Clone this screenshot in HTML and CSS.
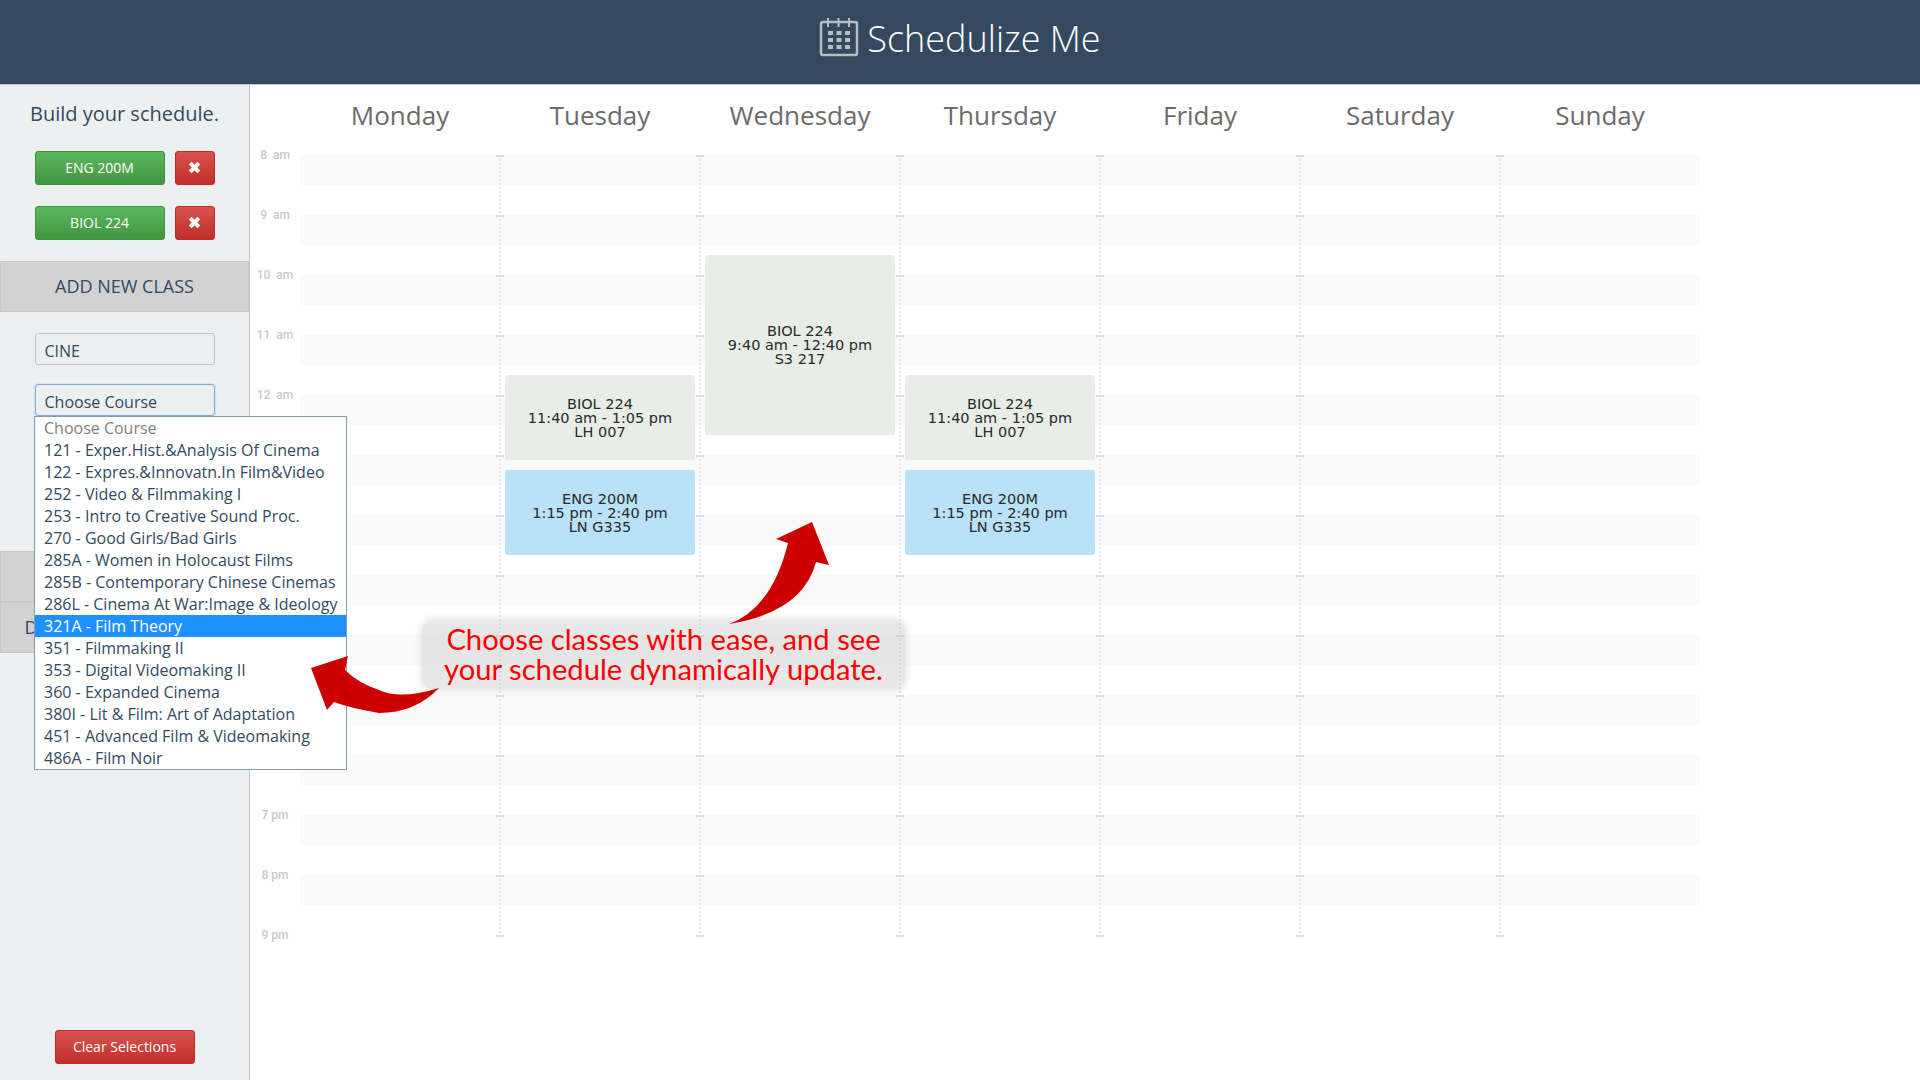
FILE: index.html
```html
<!DOCTYPE html>
<html lang="en">
  <head>
    <meta charset="UTF-8" />
    <title>Schedulize Me</title>
    <link rel="stylesheet" href="styles.css">
  </head>
  <body>
    <header class="topbar">
      <svg class="logo" width="40" height="40" viewBox="0 0 40 40">
        <rect x="2" y="5" width="36" height="33" rx="2" fill="none" stroke="#b9bdc2" stroke-width="2.5" />
        <path d="M9 1v9M19.500 1v9M30 1v9" stroke="#b9bdc2" stroke-width="2" />
        <g fill="#b9bdc2">
          <rect x="9" y="14" width="5" height="4" /><rect x="17.500" y="14" width="5" height="4" /><rect x="26" y="14" width="5" height="4" />
          <rect x="9" y="21" width="5" height="4" /><rect x="17.500" y="21" width="5" height="4" /><rect x="26" y="21" width="5" height="4" />
          <rect x="9" y="28" width="5" height="4" /><rect x="17.500" y="28" width="5" height="4" /><rect x="26" y="28" width="5" height="4" />
        </g>
      </svg>
      <h1>Schedulize Me</h1>
    </header>

    <main class="layout">
      <aside class="sidebar">
        <h2 class="build">Build your schedule.</h2>

        <div class="picked">
          <button class="btn btn-green">ENG 200M</button>
          <button class="btn btn-red btn-x">
            <svg width="13" height="13" viewBox="0 0 13 13"><path d="M2.200 2.200l8.600 8.600M10.800 2.200l-8.600 8.600" stroke="#fff" stroke-width="4" /></svg>
          </button>
        </div>
        <div class="picked">
          <button class="btn btn-green">BIOL 224</button>
          <button class="btn btn-red btn-x">
            <svg width="13" height="13" viewBox="0 0 13 13"><path d="M2.200 2.200l8.600 8.600M10.800 2.200l-8.600 8.600" stroke="#fff" stroke-width="4" /></svg>
          </button>
        </div>

        <div class="band band-add">ADD NEW CLASS</div>

        <div class="field">CINE</div>
        <div class="field field-focus">Choose Course</div>

        <div class="band band-first"></div>
        <div class="band">DOWNLOAD SCHEDULE</div>

        <button class="btn btn-red btn-clear">Clear Selections</button>
      </aside>

      <section class="calendar">
        <div class="days">
          <span>Monday</span>
          <span>Tuesday</span>
          <span>Wednesday</span>
          <span>Thursday</span>
          <span>Friday</span>
          <span>Saturday</span>
          <span>Sunday</span>
        </div>
        <div class="grid">
          <div class="times">
            <span>8 &nbsp;am</span><span>9 &nbsp;am</span><span>10 &nbsp;am</span><span>11 &nbsp;am</span>
            <span>12 &nbsp;am</span>
            <!-- 1 pm to 6 pm sit behind the open menu -->
            <span></span><span></span><span></span><span></span><span></span><span></span>
            <span>7 pm</span><span>8 pm</span><span>9 pm</span>
          </div>
          <div class="col"></div>
          <div class="col">
            <div class="event biol" style="top: 220px; height: 85px">BIOL 224<br />11:40 am - 1:05 pm<br />LH 007</div>
            <div class="event eng" style="top: 315px; height: 85px">ENG 200M<br />1:15 pm - 2:40 pm<br />LN G335</div>
          </div>
          <div class="col">
            <div class="event biol" style="top: 100px; height: 180px">BIOL 224<br />9:40 am - 12:40 pm<br />S3 217</div>
          </div>
          <div class="col">
            <div class="event biol" style="top: 220px; height: 85px">BIOL 224<br />11:40 am - 1:05 pm<br />LH 007</div>
            <div class="event eng" style="top: 315px; height: 85px">ENG 200M<br />1:15 pm - 2:40 pm<br />LN G335</div>
          </div>
          <div class="col"></div>
          <div class="col"></div>
          <div class="col"></div>
        </div>
      </section>
    </main>

    <ul class="dropdown">
      <li class="muted">Choose Course</li>
      <li>121 - Exper.Hist.&amp;Analysis Of Cinema</li>
      <li>122 - Expres.&amp;Innovatn.In Film&amp;Video</li>
      <li>252 - Video &amp; Filmmaking I</li>
      <li>253 - Intro to Creative Sound Proc.</li>
      <li>270 - Good Girls/Bad Girls</li>
      <li>285A - Women in Holocaust Films</li>
      <li>285B - Contemporary Chinese Cinemas</li>
      <li>286L - Cinema At War:Image &amp; Ideology</li>
      <li class="active">321A - Film Theory</li>
      <li>351 - Filmmaking II</li>
      <li>353 - Digital Videomaking II</li>
      <li>360 - Expanded Cinema</li>
      <li>380I - Lit &amp; Film: Art of Adaptation</li>
      <li>451 - Advanced Film &amp; Videomaking</li>
      <li>486A - Film Noir</li>
    </ul>

    <p class="callout">Choose classes with ease, and see<br />your schedule dynamically update.</p>

    <svg class="arrows" width="1920" height="1080" viewBox="0 0 1920 1080">
      <path d="M729 624 Q772 608 788 543 L776 539 L812 522 L829 565 L816 562 Q803 612 729 624 Z" fill="#cc0000" />
      <path d="M439 688 Q400 700 379 690 Q358 683 345 670 L348 656 L311 668 L327 710 L334 702 Q350 708 379 713 Q415 713 439 688 Z" fill="#cc0000" />
    </svg>
  </body>
</html>
```

FILE: styles.css
```css
* {
  box-sizing: border-box;
}
html,
body {
  height: 100%;
}
body {
  margin: 0;
  overflow: hidden;
  display: flex;
  flex-direction: column;
  font-family: "Open Sans", sans-serif;
  color: #34495e;
  background-color: #fff;
}

/* top bar */
.topbar {
  height: 85px;
  flex-shrink: 0;
  display: flex;
  justify-content: center;
  align-items: flex-start;
  gap: 8px;
  padding-top: 17px;
  background-color: #34495e;
  border-bottom: 1px solid #bdc3c7;
}
.topbar h1 {
  margin: 0;
  font-size: 36px;
  line-height: 44px;
  font-weight: 300;
  color: #fff;
}

.layout {
  flex: 1;
  display: flex;
  min-height: 0;
}

/* left column */
.sidebar {
  width: 250px;
  flex-shrink: 0;
  display: flex;
  flex-direction: column;
  align-items: center;
  background-color: #ecf0f1;
  border-right: 1px solid #bdc3c7;
}
.build {
  margin: 15px 0 23px;
  font-size: 20px;
  line-height: 28px;
  font-weight: 400;
}
.picked {
  display: flex;
  gap: 10px;
  margin-bottom: 21px;
}
.btn {
  height: 34px;
  padding: 0 0 2px;
  border-radius: 3px;
  font-family: inherit;
  font-size: 14px;
  color: #fff;
}
.btn-green {
  width: 130px;
  background-image: linear-gradient(#5cb85c, #419641);
  border: 1px solid #3e8f3e;
}
.btn-red {
  background-image: linear-gradient(#d9534f, #c12e2a);
  border: 1px solid #b92c28;
}
.btn-x {
  width: 40px;
  display: flex;
  align-items: center;
  justify-content: center;
}
.btn-clear {
  width: 140px;
  margin-top: auto;
  margin-bottom: 16px;
}
.band {
  width: 100%;
  height: 51px;
  padding-bottom: 1px;
  display: flex;
  align-items: center;
  justify-content: center;
  font-size: 18px;
  white-space: nowrap;
  background-color: #d2d2d2;
  border: 1px solid #c8c8c8;
}
.band-add {
  margin-bottom: 21px;
}
.band-first {
  margin-top: 135px;
}
.field {
  width: 180px;
  height: 32px;
  margin-bottom: 19px;
  padding: 4px 0 0 9px;
  display: flex;
  align-items: center;
  font-size: 16px;
  border: 1px solid #bdc3c7;
  border-radius: 3px;
}
.field-focus {
  margin-bottom: 0;
  border: 1px solid #7ea8e0;
  box-shadow: 0 0 2px #9fc0ee;
}

/* calendar */
.calendar {
  flex: 1;
}
.days {
  height: 70px;
  display: grid;
  grid-template-columns: repeat(7, 200px);
  padding: 0 0 10px 50px;
  align-items: center;
  text-align: center;
  font-size: 26px;
  font-weight: 400;
  color: #6b6b6b;
}
.grid {
  display: flex;
  height: 782px;
}
.times {
  width: 50px;
  display: flex;
  flex-direction: column;
  align-items: center;
  margin-top: -8px;
}
.times span {
  height: 60px;
  flex-shrink: 0;
  font-family: Roboto, sans-serif;
  font-size: 12px;
  line-height: 16px;
  font-weight: 500;
  color: #c9c9c9;
}
.col {
  position: relative;
  width: 200px;
  height: 780px;
  background-image: linear-gradient(#fafafa 50%, #fff 50%);
  background-size: 100% 60px;
}
.col + .col::before {
  content: "";
  position: absolute;
  top: 0;
  left: -4px;
  width: 8px;
  height: 782px;
  background-image: linear-gradient(#dedede 2px, transparent 2px),
    repeating-linear-gradient(#e9e9e9 0 2px, transparent 2px 4px);
  background-size: 100% 60px, 2px 100%;
  background-position: 0 0, 3px 0;
  background-repeat: repeat-y, no-repeat;
}
.event {
  position: absolute;
  left: 5px;
  right: 5px;
  display: flex;
  align-items: center;
  justify-content: center;
  text-align: center;
  border-radius: 3px;
  font-family: "DejaVu Sans", sans-serif;
  font-size: 14.500px;
  line-height: 14px;
  color: #2a2a2a;
}
.biol {
  background-color: #e8ede7;
}
.eng {
  background-color: #b9e1f7;
}

/* open select menu, lies over the page */
.dropdown {
  position: absolute;
  left: 34px;
  top: 416px;
  width: 313px;
  margin: 0;
  padding: 0;
  list-style: none;
  background-color: #fff;
  border: 1px solid #7f9db9;
  font-size: 16px;
}
.dropdown li {
  height: 22px;
  line-height: 22px;
  padding-left: 9px;
  white-space: nowrap;
}
.dropdown .muted {
  color: #808080;
}
.dropdown .active {
  background-color: #1e90ff;
  color: #fff;
}

/* annotation over the screenshot */
.callout {
  position: absolute;
  left: 422px;
  top: 620px;
  width: 483px;
  height: 70px;
  margin: 0;
  padding-top: 4px;
  text-align: center;
  font-family: Lato, sans-serif;
  font-size: 29.200px;
  line-height: 30px;
  color: #f00;
  background-color: rgba(190, 190, 190, 0.35);
  border-radius: 12px;
  box-shadow: 0 0 6px 2px rgba(190, 190, 190, 0.35);
}
.arrows {
  position: absolute;
  left: 0;
  top: 0;
  pointer-events: none;
}
```
